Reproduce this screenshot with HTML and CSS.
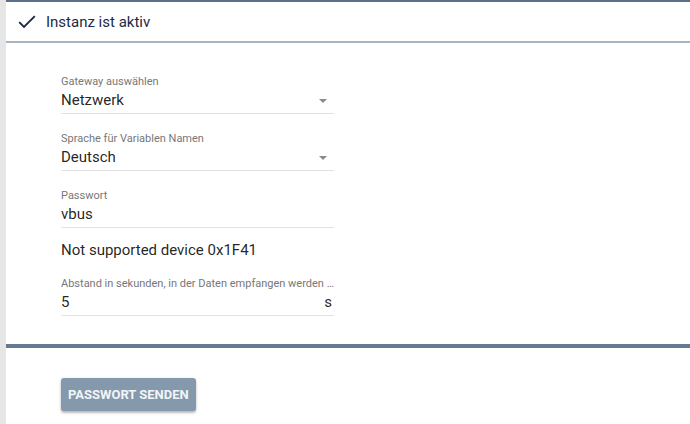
FILE: index.html
```html
<!DOCTYPE html>
<html lang="de">
<head>
<meta charset="utf-8">
<title>Instanz</title>
<link rel="stylesheet" href="styles.css">
</head>
<body>
<div class="page">
  <div class="strip"></div>
  <div class="main">
    <div class="header">
      <svg class="check" width="18" height="14" viewBox="0 0 18 14"><path d="M1.2 7.2 L6 12 L16.8 1.2" fill="none" stroke="#1d2a45" stroke-width="1.9"/></svg>
      <span class="title">Instanz ist aktiv</span>
    </div>
    <div class="form">
      <div class="field">
        <div class="label">Gateway auswählen</div>
        <div class="value select">Netzwerk<span class="arrow"></span></div>
      </div>
      <div class="field">
        <div class="label">Sprache für Variablen Namen</div>
        <div class="value select">Deutsch<span class="arrow"></span></div>
      </div>
      <div class="field">
        <div class="label">Passwort</div>
        <div class="value">vbus</div>
      </div>
      <div class="note">Not supported device 0x1F41</div>
      <div class="field last">
        <div class="label">Abstand in sekunden, in der Daten empfangen werden …</div>
        <div class="value">5<span class="suffix">s</span></div>
      </div>
    </div>
    <div class="separator"></div>
    <div class="actions">
      <button class="btn">Passwort senden</button>
    </div>
  </div>
</div>
</body>
</html>
```
FILE: styles.css
```css
html, body {
  margin: 0;
  padding: 0;
  background: #ffffff;
  font-family: Roboto, "Liberation Sans", sans-serif;
}
.page {
  display: flex;
  width: 690px;
  height: 424px;
  overflow: hidden;
}
.strip {
  width: 6px;
  flex: none;
  background: #e6e6e6;
}
.main {
  flex: 1;
  background: #ffffff;
}
.header {
  height: 39px;
  border-top: 2px solid #5b6f86;
  border-bottom: 2px solid #a8b5c2;
  display: flex;
  align-items: center;
  padding-left: 12px;
}
.check {
  display: block;
  margin-right: 10px;
  margin-top: 1px;
}
.title {
  font-size: 15px;
  color: #1d2a45;
}
.form {
  padding: 32px 0 28px 55px;
  width: 273px;
}
.field {
  margin-bottom: 18px;
}
.field.last {
  margin-bottom: 0;
}
.label {
  font-size: 11px;
  line-height: 14px;
  height: 14px;
  color: #777777;
  white-space: nowrap;
  overflow: hidden;
}
.value {
  position: relative;
  font-size: 15px;
  line-height: 22px;
  height: 22px;
  color: rgba(0, 0, 0, 0.87);
  padding-bottom: 2px;
  border-bottom: 1px solid #e2e2e2;
}
.arrow {
  position: absolute;
  right: 7px;
  top: 10px;
  width: 0;
  height: 0;
  border-left: 4.5px solid transparent;
  border-right: 4.5px solid transparent;
  border-top: 4.5px solid #8a8a8a;
}
.suffix {
  position: absolute;
  right: 2px;
  top: 0;
}
.note {
  font-size: 15px;
  line-height: 20px;
  color: rgba(0, 0, 0, 0.87);
  margin-top: -6px;
  margin-bottom: 17px;
}
.separator {
  height: 4px;
  background: #647b92;
}
.actions {
  padding: 30px 0 0 55px;
}
.btn {
  height: 33px;
  padding: 0 7px;
  border: none;
  border-radius: 3px;
  background: #8599ad;
  color: #f2f5f8;
  font-family: Roboto, "Liberation Sans", sans-serif;
  font-size: 13px;
  font-weight: 700;
  text-transform: uppercase;
  box-shadow: 0 2px 2px rgba(0, 0, 0, 0.2), 0 1px 4px rgba(0, 0, 0, 0.12);
}
```
